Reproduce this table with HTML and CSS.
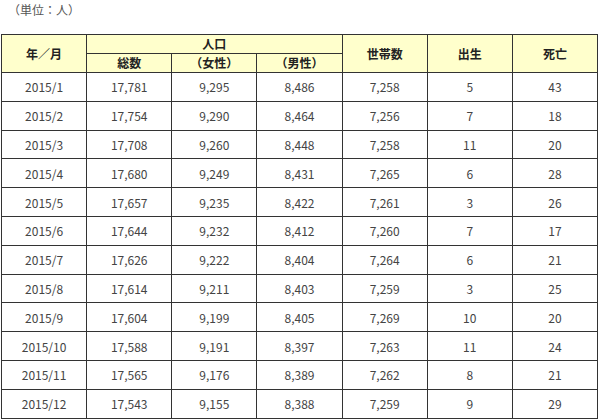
FILE: index.html
```html
<!DOCTYPE html>
<html lang="ja">
<head>
<meta charset="utf-8">
<link rel="stylesheet" href="styles.css">
</head>
<body>
<div class="page">
  <p class="unit">（単位：人）</p>
  <table class="stats">
    <thead>
      <tr class="h1">
        <th rowspan="2">年／月</th>
        <th colspan="3">人口</th>
        <th rowspan="2">世帯数</th>
        <th rowspan="2">出生</th>
        <th rowspan="2">死亡</th>
      </tr>
      <tr class="h2">
        <th>総数</th>
        <th>（女性）</th>
        <th>（男性）</th>
      </tr>
    </thead>
    <tbody>
      <tr><td>2015/1</td><td>17,781</td><td>9,295</td><td>8,486</td><td>7,258</td><td>5</td><td>43</td></tr>
      <tr><td>2015/2</td><td>17,754</td><td>9,290</td><td>8,464</td><td>7,256</td><td>7</td><td>18</td></tr>
      <tr><td>2015/3</td><td>17,708</td><td>9,260</td><td>8,448</td><td>7,258</td><td>11</td><td>20</td></tr>
      <tr><td>2015/4</td><td>17,680</td><td>9,249</td><td>8,431</td><td>7,265</td><td>6</td><td>28</td></tr>
      <tr><td>2015/5</td><td>17,657</td><td>9,235</td><td>8,422</td><td>7,261</td><td>3</td><td>26</td></tr>
      <tr><td>2015/6</td><td>17,644</td><td>9,232</td><td>8,412</td><td>7,260</td><td>7</td><td>17</td></tr>
      <tr><td>2015/7</td><td>17,626</td><td>9,222</td><td>8,404</td><td>7,264</td><td>6</td><td>21</td></tr>
      <tr><td>2015/8</td><td>17,614</td><td>9,211</td><td>8,403</td><td>7,259</td><td>3</td><td>25</td></tr>
      <tr><td>2015/9</td><td>17,604</td><td>9,199</td><td>8,405</td><td>7,269</td><td>10</td><td>20</td></tr>
      <tr><td>2015/10</td><td>17,588</td><td>9,191</td><td>8,397</td><td>7,263</td><td>11</td><td>24</td></tr>
      <tr><td>2015/11</td><td>17,565</td><td>9,176</td><td>8,389</td><td>7,262</td><td>8</td><td>21</td></tr>
      <tr><td>2015/12</td><td>17,543</td><td>9,155</td><td>8,388</td><td>7,259</td><td>9</td><td>29</td></tr>
    </tbody>
  </table>
</div>
</body>
</html>
```

FILE: styles.css
```css
html, body {
  margin: 0;
  padding: 0;
  background: #ffffff;
}

body {
  font-family: "Noto Sans CJK JP", "Noto Sans", sans-serif;
  color: #444444;
}

.page {
  padding: 0 2px 0 1px;
}

.unit {
  margin: 0;
  padding: 2px 0 0 7px;
  height: 34px;
  box-sizing: border-box;
  font-size: 12px;
  line-height: 16px;
  color: #555555;
}

.stats {
  width: 597px;
  border-collapse: collapse;
  table-layout: fixed;
  font-size: 12px;
}

.stats th,
.stats td {
  border: 1px solid #333333;
  padding: 0;
  text-align: center;
  vertical-align: middle;
}

.stats th {
  background: #ffffcc;
  color: #222222;
  font-weight: bold;
  line-height: 16px;
}

.stats tr.h1 th {
  height: 18px;
}

.stats tr.h2 th {
  height: 18px;
}

.stats td {
  height: 26.8px;
  padding-top: 1px;
  line-height: 16px;
  color: #444444;
}
```
